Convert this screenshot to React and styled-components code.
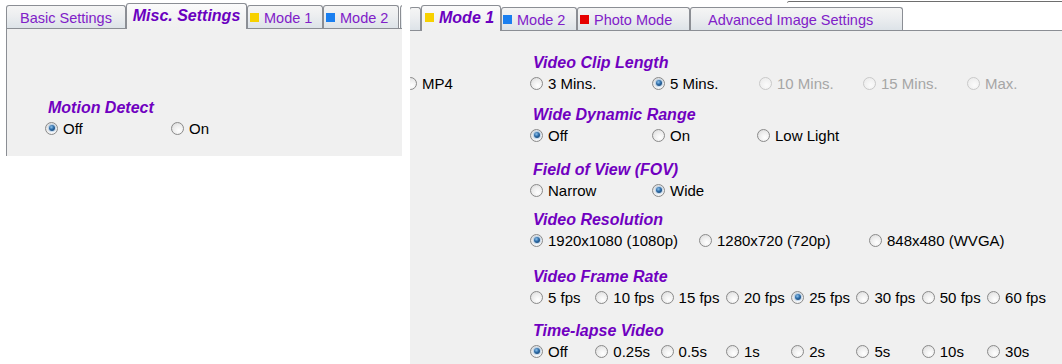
import React from "react";
import styled, { createGlobalStyle } from "styled-components";

const GlobalStyle = createGlobalStyle`
  html, body {
    margin: 0;
    padding: 0;
    background: #ffffff;
  }
  body {
    font-family: "Liberation Sans", Arial, sans-serif;
    overflow: hidden;
  }
`;

const Page = styled.div`
  display: flex;
  align-items: flex-start;
  width: 1062px;
  height: 364px;
  overflow: hidden;
  background: #fff;
`;

const Window = styled.div`
  display: flex;
  flex-direction: column;
  flex-shrink: 0;
  width: ${(p) => p.$w}px;
  height: ${(p) => p.$h}px;
  margin-left: ${(p) => p.$ml || 0}px;
  overflow: hidden;
`;

const TopEdge = styled.div`
  display: flex;
  height: 3px;
`;

const TopRule = styled.div`
  flex: 1;
  margin: 1px 0 0 ${(p) => p.$from}px;
  border-top: 1px solid #6e6e6e;
  border-left: 1px solid #9a9a9a;
  border-top-left-radius: 3px;
`;

const TabStrip = styled.div`
  display: flex;
  align-items: flex-end;
  height: ${(p) => p.$h}px;
  padding-left: ${(p) => p.$pl || 0}px;
  flex-shrink: 0;
`;

const Tab = styled.div`
  box-sizing: border-box;
  display: flex;
  align-items: center;
  justify-content: ${(p) => (p.$center ? "center" : "flex-start")};
  flex-shrink: 0;
  width: ${(p) => p.$w}px;
  height: ${(p) => (p.$active ? 26 : 23)}px;
  margin-bottom: ${(p) => (p.$active ? -1 : 0)}px;
  margin-left: ${(p) => p.$ml || 0}px;
  padding: ${(p) => (p.$active ? "0 0 2px" : "1px 0 0")};
  padding-left: ${(p) => p.$pl || 0}px;
  border: 1px solid #8b8e94;
  border-bottom: none;
  border-radius: 3px 3px 0 0;
  background: ${(p) =>
    p.$active
      ? "linear-gradient(#fbfbfb, #f2f2f2 60%, #f0f0f0)"
      : "linear-gradient(#f5f5f5, #eceef0 45%, #dde3e8)"};
  color: ${(p) => (p.$active ? "#6a00c0" : "#8020c8")};
  font-size: ${(p) => (p.$active ? 16 : 14.5)}px;
  font-weight: ${(p) => (p.$active ? 700 : 400)};
  font-style: ${(p) => (p.$active ? "italic" : "normal")};
  white-space: nowrap;
  position: relative;
  z-index: ${(p) => (p.$active ? 2 : 1)};
`;

const Chip = styled.span`
  display: inline-block;
  width: 9px;
  height: 9px;
  margin-right: 5px;
  background: ${(p) => p.$color};
  flex-shrink: 0;
`;

const Panel = styled.div`
  flex: 1;
  box-sizing: border-box;
  margin-left: ${(p) => p.$ml || 0}px;
  padding: ${(p) => p.$pt}px 0 0 ${(p) => p.$pl}px;
  background: #f0f0f0;
  border-top: 1px solid #8b8e94;
  border-left: ${(p) => (p.$edge ? "1px solid #8b8e94" : "none")};
`;

const Split = styled.div`
  display: flex;
  margin-top: ${(p) => p.$mt || 0}px;
`;

const Aside = styled.div`
  display: flex;
  flex-direction: column;
  width: ${(p) => p.$w}px;
  margin-left: -${(p) => p.$w}px;
  flex-shrink: 0;
`;

const Group = styled.div`
  display: flex;
  flex-direction: column;
  margin-top: ${(p) => p.$mt || 0}px;
`;

const Heading = styled.div`
  height: 18px;
  line-height: 18px;
  font-size: 16px;
  font-weight: 700;
  font-style: italic;
  color: #7000c0;
  white-space: nowrap;
`;

const Row = styled.div`
  display: flex;
  align-items: center;
  height: 20px;
  margin: 1px 0 0 -3px;
  padding-bottom: 1px;
`;

const Option = styled.label`
  display: flex;
  align-items: center;
  width: ${(p) => p.$w}px;
  flex-shrink: 0;
  font-size: 15px;
  color: ${(p) => (p.$disabled ? "#a6a6a6" : "#000")};
  white-space: nowrap;
`;

const Radio = styled.span`
  position: relative;
  box-sizing: border-box;
  width: 13px;
  height: 13px;
  margin-right: 5px;
  flex-shrink: 0;
  border-radius: 50%;
  border: 1px solid ${(p) => (p.$disabled ? "#c9c9c9" : "#8a8a8a")};
  background: ${(p) =>
    p.$disabled
      ? "radial-gradient(circle at 60% 65%, #fbfbfb, #eeeeee 70%)"
      : "radial-gradient(circle at 62% 68%, #ffffff, #ececec 55%, #d4d4d4)"};

  &::after {
    content: "";
    display: ${(p) => (p.$checked ? "block" : "none")};
    position: absolute;
    left: 2.5px;
    top: 2.5px;
    width: 6px;
    height: 6px;
    border-radius: 50%;
    background: radial-gradient(circle at 40% 35%, #8ec2ec, #2b6aa6 45%, #143e6a 90%);
    box-shadow: 0 0 1px 1px rgba(120, 170, 220, 0.45);
  }
`;

const RadioOption = ({ w, checked, disabled, children }) => (
  <Option $w={w} $disabled={disabled}>
    <Radio $checked={checked} $disabled={disabled} />
    {children}
  </Option>
);

const leftTabs = [
  { label: "Basic Settings", w: 120, center: true },
  { label: "Misc. Settings", w: 121, center: true, active: true },
  { label: "Mode 1", w: 76, pl: 2, chip: "#f7d100" },
  { label: "Mode 2", w: 76, pl: 2, chip: "#1a7ff0" },
  { label: "", w: 20, ml: 1 },
];

const rightTabs = [
  { label: "", w: 12, ml: -1 },
  { label: "Mode 1", w: 80, pl: 3, chip: "#f7d100", active: true },
  { label: "Mode 2", w: 76, pl: 1, chip: "#1a7ff0" },
  { label: "Photo Mode", w: 113, pl: 2, chip: "#e60000" },
  { label: "Advanced Image Settings", w: 213, pl: 17 },
];

const fps = ["5 fps", "10 fps", "15 fps", "20 fps", "25 fps", "30 fps", "50 fps", "60 fps"];
const lapse = ["Off", "0.25s", "0.5s", "1s", "2s", "5s", "10s", "30s"];

const modeGroups = [
  {
    title: "Wide Dynamic Range",
    mt: 12,
    options: [
      { label: "Off", w: 122, checked: true },
      { label: "On", w: 105 },
      { label: "Low Light", w: 120 },
    ],
  },
  {
    title: "Field of View (FOV)",
    mt: 15,
    options: [
      { label: "Narrow", w: 122 },
      { label: "Wide", w: 100, checked: true },
    ],
  },
  {
    title: "Video Resolution",
    mt: 10,
    options: [
      { label: "1920x1080 (1080p)", w: 169, checked: true },
      { label: "1280x720 (720p)", w: 170 },
      { label: "848x480 (WVGA)", w: 140 },
    ],
  },
  {
    title: "Video Frame Rate",
    mt: 17,
    options: fps.map((label) => ({ label, w: 65.3, checked: label === "25 fps" })),
  },
  {
    title: "Time-lapse Video",
    mt: 14,
    options: lapse.map((label) => ({ label, w: 65.3, checked: label === "Off" })),
  },
];

const clipOptions = [
  { label: "3 Mins.", w: 122 },
  { label: "5 Mins.", w: 107, checked: true },
  { label: "10 Mins.", w: 104, disabled: true },
  { label: "15 Mins.", w: 104, disabled: true },
  { label: "Max.", w: 60, disabled: true },
];

const renderTabs = (tabs) =>
  tabs.map((t, i) => (
    <Tab
      key={i}
      $w={t.w}
      $pl={t.pl}
      $ml={t.ml}
      $center={t.center}
      $active={t.active}
    >
      {t.chip && <Chip $color={t.chip} />}
      {t.label}
    </Tab>
  ));

export default function App() {
  return (
    <>
      <GlobalStyle />
      <Page>
        <Window $w={402} $h={156}>
          <TabStrip $h={28} $pl={6}>
            {renderTabs(leftTabs)}
          </TabStrip>
          <Panel $ml={6} $pt={70} $pl={41} $edge>
            <Group>
              <Heading>Motion Detect</Heading>
              <Row>
                <RadioOption w={126} checked>
                  Off
                </RadioOption>
                <RadioOption w={60}>On</RadioOption>
              </Row>
            </Group>
          </Panel>
        </Window>

        <Window $w={652} $h={364} $ml={8}>
          <TopEdge>
            <TopRule $from={377} />
          </TopEdge>
          <TabStrip $h={27}>{renderTabs(rightTabs)}</TabStrip>
          <Panel $pt={23} $pl={123}>
            <Split>
              <Aside $w={126}>
                <Heading />
                <Row>
                  <RadioOption w={126}>MP4</RadioOption>
                </Row>
              </Aside>
              <Group>
                <Heading>Video Clip Length</Heading>
                <Row>
                  {clipOptions.map((o) => (
                    <RadioOption
                      key={o.label}
                      w={o.w}
                      checked={o.checked}
                      disabled={o.disabled}
                    >
                      {o.label}
                    </RadioOption>
                  ))}
                </Row>
              </Group>
            </Split>
            {modeGroups.map((g) => (
              <Group key={g.title} $mt={g.mt}>
                <Heading>{g.title}</Heading>
                <Row>
                  {g.options.map((o) => (
                    <RadioOption key={o.label} w={o.w} checked={o.checked}>
                      {o.label}
                    </RadioOption>
                  ))}
                </Row>
              </Group>
            ))}
          </Panel>
        </Window>
      </Page>
    </>
  );
}
